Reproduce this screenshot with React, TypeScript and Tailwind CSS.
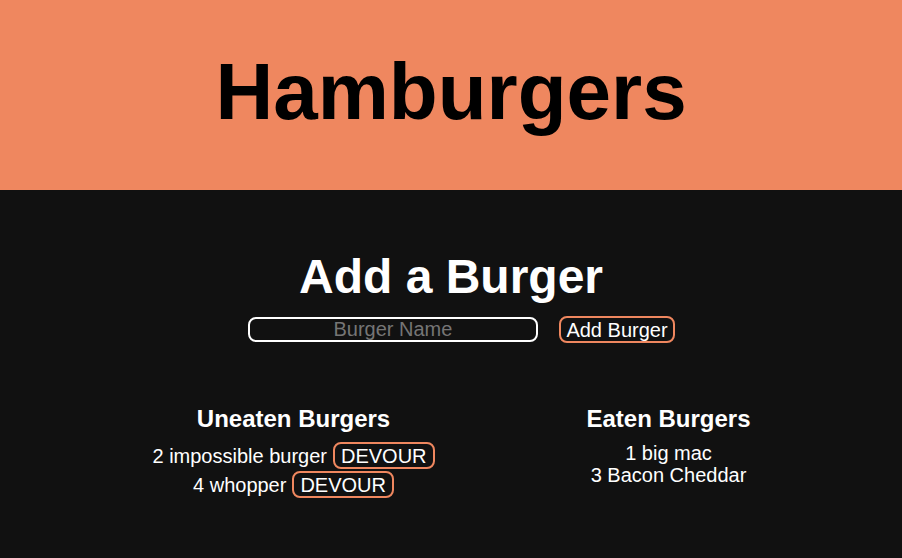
const uneaten = [
  { id: 2, name: "impossible burger" },
  { id: 4, name: "whopper" },
];

const eaten = [
  { id: 1, name: "big mac" },
  { id: 3, name: "Bacon Cheddar" },
];

export default function App() {
  return (
    <div className="min-h-[558px] bg-[#111111] font-['Liberation_Sans',Arial,sans-serif]">
      <header className="h-[190px] bg-[#ef875f] flex items-center justify-center pb-[6px]">
        <h1 className="text-[80px] font-bold leading-none text-black">Hamburgers</h1>
      </header>

      <main className="text-white">
        <h2 className="mt-[63px] text-center text-[48px] font-bold leading-none">Add a Burger</h2>
        <form className="mt-[15px] flex items-center justify-center gap-[21px] pl-[21px]">
          <input
            placeholder="Burger Name"
            className="w-[290px] h-[25px] rounded-[8px] border-2 border-white bg-transparent text-center text-[20px] leading-none outline-none placeholder:text-[#757575]"
          />
          <button
            type="button"
            className="h-[27px] px-[5.5px] rounded-[8px] border-2 border-[#ef875f] text-[20px] leading-none"
          >
            Add Burger
          </button>
        </form>

        <div className="ml-[106px] w-[750px] grid grid-cols-2 mt-[64px] text-center">
          <section>
            <h3 className="text-[24px] font-bold leading-none">Uneaten Burgers</h3>
            <ul className="mt-[11px] flex flex-col items-center gap-[2px] text-[20px]">
              {uneaten.map((b) => (
                <li key={b.id} className="h-[27px] flex items-center gap-[6px]">
                  <span>
                    {b.id} {b.name}
                  </span>
                  <button
                    type="button"
                    className="h-[27px] px-[6px] rounded-[8px] border-2 border-[#ef875f] leading-none"
                  >
                    DEVOUR
                  </button>
                </li>
              ))}
            </ul>
          </section>
          <section>
            <h3 className="text-[24px] font-bold leading-none">Eaten Burgers</h3>
            <ul className="mt-[11px] text-[20px] leading-[22px]">
              {eaten.map((b) => (
                <li key={b.id}>
                  {b.id} {b.name}
                </li>
              ))}
            </ul>
          </section>
        </div>
      </main>
    </div>
  );
}
